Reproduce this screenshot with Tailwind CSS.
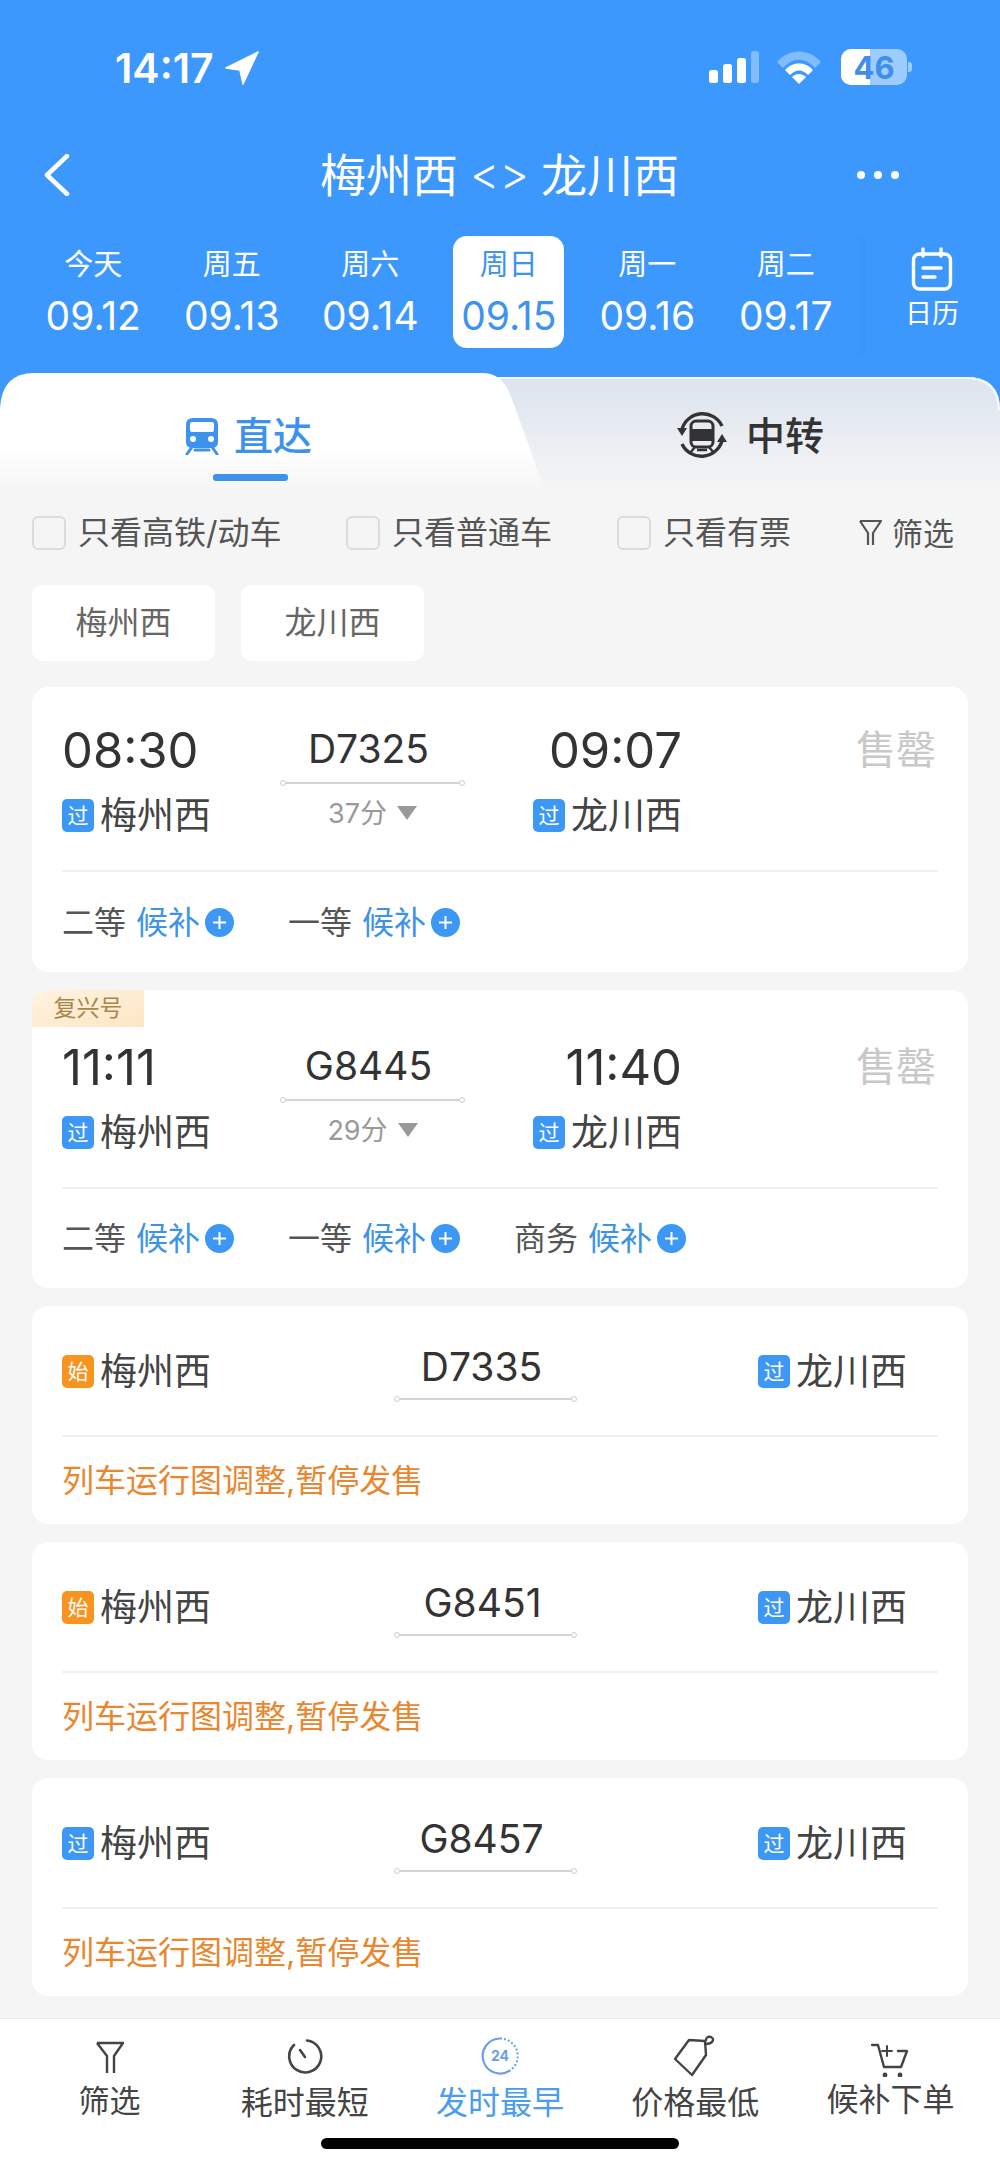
<!DOCTYPE html>
<html lang="zh">
<head>
<meta charset="utf-8">
<title>梅州西 - 龙川西</title>
<script src="https://cdn.jsdelivr.net/npm/@tailwindcss/browser@4"></script>
</head>
<body class="m-0">
<div class="w-[1000px] h-[2167px] overflow-hidden relative bg-[#f5f5f5] font-['Inter','Noto_Sans_CJK_SC',sans-serif]">

  <!-- Blue header -->
  <header class="h-[372px] bg-[#3d98fd] text-white relative">
    <!-- status bar -->
    <div class="h-[137px] pt-[48px] pl-[115px] pr-[88px] flex items-start justify-between">
      <div class="flex items-center h-[40px] gap-[11px]">
        <span class="text-[41px] font-semibold leading-none">14:17</span>
        <svg class="w-[34px] h-[34px]" viewBox="0 0 34 34"><path d="M33 1 L1 17 L15 19 L18 33 Z" fill="#fff" stroke="#fff" stroke-width="1.5" stroke-linejoin="round"/></svg>
      </div>
      <div class="flex items-center h-[36px] mt-[1px]">
        <svg class="w-[52px] h-[34px]" viewBox="0 0 52 34">
          <rect x="1" y="20" width="9" height="13" rx="2.5" fill="#fff"/>
          <rect x="15" y="14" width="9" height="19" rx="2.5" fill="#fff"/>
          <rect x="29" y="8" width="9" height="25" rx="2.5" fill="#fff"/>
          <rect x="43" y="1" width="8" height="32" rx="2.5" fill="#fff" fill-opacity=".35"/>
        </svg>
        <svg class="w-[46px] h-[34px] ml-[16px]" viewBox="0 0 46 34">
          <path d="M1 12 C13 -2 33 -2 45 12 L39 18 C29 7 17 7 7 18 Z" fill="#fff" fill-opacity=".35"/>
          <path d="M9 20 C17 11 29 11 37 20 L32 25 C26 19 20 19 14 25 Z" fill="#fff"/>
          <path d="M16 27 C20 23 26 23 30 27 L23 34 Z" fill="#fff"/>
        </svg>
        <div class="relative w-[66px] h-[36px] ml-[19px] rounded-[10px] overflow-hidden bg-white/50">
          <div class="absolute left-0 top-0 bottom-0 w-[29px] bg-white"></div>
          <span class="absolute inset-0 flex items-center justify-center text-[31px] font-bold text-[#3d8fe8] leading-none">46</span>
        </div>
        <div class="w-[4px] h-[10px] ml-[1px] rounded-r-[3px] bg-white/50"></div>
      </div>
    </div>
    <!-- nav -->
    <nav class="h-[76px] relative flex items-center justify-center">
      <svg class="absolute left-[42px] top-[17px] w-[30px] h-[42px]" viewBox="0 0 30 42"><path d="M25 2 L5 21 L25 40" fill="none" stroke="#fff" stroke-width="4.5" stroke-linecap="round" stroke-linejoin="round"/></svg>
      <div class="text-[46px] leading-none flex items-center ml-[-1px]">
        <span>梅州西</span><span class="text-[45px] font-light mx-[12px] -mt-[4px]">&lt;&gt;</span><span>龙川西</span>
      </div>
      <div class="absolute left-[857px] top-[34px] flex gap-[9px]">
        <span class="w-[8px] h-[8px] rounded-full bg-white"></span><span class="w-[8px] h-[8px] rounded-full bg-white"></span><span class="w-[8px] h-[8px] rounded-full bg-white"></span>
      </div>
    </nav>
    <!-- dates -->
    <div class="flex pl-[24px] mt-[23px] h-[112px] relative">
      <div class="w-[138.5px] flex flex-col items-center"><span class="h-[57px] pt-[14px] text-[29px] leading-none">今天</span><span class="text-[39px] leading-none pt-[3px]">09.12</span></div>
      <div class="w-[138.5px] flex flex-col items-center"><span class="h-[57px] pt-[14px] text-[29px] leading-none">周五</span><span class="text-[39px] leading-none pt-[3px]">09.13</span></div>
      <div class="w-[138.5px] flex flex-col items-center"><span class="h-[57px] pt-[14px] text-[29px] leading-none">周六</span><span class="text-[39px] leading-none pt-[3px]">09.14</span></div>
      <div class="w-[111px] mx-[13.75px] flex flex-col items-center bg-white rounded-[14px] text-[#3d93ee]"><span class="h-[57px] pt-[14px] text-[29px] leading-none">周日</span><span class="text-[39px] leading-none pt-[3px]">09.15</span></div>
      <div class="w-[138.5px] flex flex-col items-center"><span class="h-[57px] pt-[14px] text-[29px] leading-none">周一</span><span class="text-[39px] leading-none pt-[3px]">09.16</span></div>
      <div class="w-[138.5px] flex flex-col items-center"><span class="h-[57px] pt-[14px] text-[29px] leading-none">周二</span><span class="text-[39px] leading-none pt-[3px]">09.17</span></div>
      <div class="w-[16px] h-[120px] ml-[-5px] bg-linear-to-r from-transparent to-[#2f88ea]/20"></div>
      <div class="w-[70px] ml-[31px] -mr-[60px] flex flex-col items-center">
        <svg class="w-[42px] h-[44px] mt-[11px] shrink-0" viewBox="0 0 42 44" fill="none" stroke="#fff" stroke-width="3.4" stroke-linecap="round"><rect x="2.5" y="7" width="37" height="35" rx="6"/><path d="M12 2 V9 M30 2 V9 M12 21 H30 M12 30 H24"/></svg>
        <span class="text-[27px] leading-none mt-[9px] whitespace-nowrap">日历</span>
      </div>
    </div>
  </header>

  <!-- Tabs -->
  <div class="relative h-[118px]">
    <svg class="absolute left-0 top-0 w-[1000px] h-[118px]" viewBox="0 0 1000 118">
      <defs>
        <linearGradient id="grayTab" x1="0" y1="0" x2="0" y2="1"><stop offset="0" stop-color="#dce4ee"/><stop offset="1" stop-color="#f5f5f5"/></linearGradient>
        <linearGradient id="whiteTab" x1="0" y1="0" x2="0" y2="1"><stop offset="0" stop-color="#ffffff"/><stop offset=".65" stop-color="#ffffff"/><stop offset="1" stop-color="#f5f5f5"/></linearGradient>
      </defs>
      <path d="M0 0 H1000 V38 Q1000 5 966 5 H480 V118 H0 Z" fill="#3d98fd"/>
      <path d="M480 5 H966 Q1000 5 1000 38 V118 H480 Z" fill="url(#grayTab)"/>
      <path d="M480 6 H966 Q998 6 999 38" fill="none" stroke="#fff" stroke-opacity=".75" stroke-width="2"/>
      <path d="M0 36 Q2 1 34 1 H482 Q502 1 510 22 L545 118 H0 Z" fill="url(#whiteTab)"/>
    </svg>
    <div class="relative flex h-full">
      <div class="absolute left-[184px] top-[44px] flex items-center gap-[14px] text-[#3d92ec]">
        <svg class="w-[36px] h-[38px]" viewBox="0 0 36 38">
          <path d="M9 1 H27 Q34 1 34 8 V25 Q34 31 27 31 H9 Q2 31 2 25 V8 Q2 1 9 1 Z" fill="#3d92ec"/>
          <rect x="6" y="5" width="24" height="10" rx="2" fill="#fff"/>
          <circle cx="9" cy="22" r="3" fill="#fff"/><circle cx="27" cy="22" r="3" fill="#fff"/>
          <path d="M8 30 L3 37 M28 30 L33 37 M11 33 H25" stroke="#3d92ec" stroke-width="3" stroke-linecap="round"/>
        </svg>
        <span class="text-[39px] font-medium leading-none">直达</span>
      </div>
      <div class="absolute left-[213px] top-[102px] w-[75px] h-[7px] rounded-[3px] bg-[#3d92ec]"></div>
      <div class="absolute left-[676px] top-[37px] flex items-center gap-[18px] text-[#333]">
        <svg class="w-[52px] h-[52px]" viewBox="0 0 52 52" fill="none">
          <path d="M6 20 A21.5 21.5 0 0 1 46 17" stroke="#333" stroke-width="3.4"/>
          <path d="M46 32 A21.5 21.5 0 0 1 6 35" stroke="#333" stroke-width="3.4"/>
          <path d="M1 19 H11 L6 27 Z M41 33 H51 L46 25 Z" fill="#333"/>
          <rect x="15" y="12" width="22" height="26" rx="5" fill="none" stroke="#333" stroke-width="3"/>
          <rect x="15" y="20" width="22" height="12" fill="#333"/>
          <path d="M19 38 L14 44 M33 38 L38 44 M21 41 H31" stroke="#333" stroke-width="2.4"/>
        </svg>
        <span class="text-[39px] font-medium leading-none">中转</span>
      </div>
    </div>
  </div>

  <!-- Filter row -->
  <div class="h-[95px] pt-[26px] pl-[32px] flex items-start text-[32px] text-[#555] leading-none relative">
    <span class="w-[34px] h-[34px] rounded-[6px] border-2 border-[#dcdcdc] bg-[#f5f5f5]"></span>
    <span class="ml-[12px] w-[268px] h-[34px] flex items-center whitespace-nowrap">只看高铁/动车</span>
    <span class="w-[34px] h-[34px] rounded-[6px] border-2 border-[#dcdcdc] bg-[#f5f5f5]"></span>
    <span class="ml-[12px] w-[225px] h-[34px] flex items-center whitespace-nowrap">只看普通车</span>
    <span class="w-[34px] h-[34px] rounded-[6px] border-2 border-[#dcdcdc] bg-[#f5f5f5]"></span>
    <span class="ml-[12px] w-[195px] h-[34px] flex items-center whitespace-nowrap">只看有票</span>
    <span class="h-[34px] flex items-center gap-[9px] text-[31px]">
      <svg class="w-[25px] h-[28px]" viewBox="0 0 25 28" fill="none" stroke="#555" stroke-width="2.2" stroke-linejoin="round"><path d="M2 2 H23 L15 14 V26 M2 2 L10 14 V26"/></svg>
      <span>筛选</span>
    </span>
  </div>

  <!-- Chips -->
  <div class="flex gap-[26px] pl-[32px] h-[102px]">
    <div class="w-[183px] h-[76px] rounded-[10px] bg-white flex items-center justify-center text-[32px] text-[#666] leading-none">梅州西</div>
    <div class="w-[183px] h-[76px] rounded-[10px] bg-white flex items-center justify-center text-[32px] text-[#666] leading-none">龙川西</div>
  </div>

  <!-- Cards -->
  <main class="flex flex-col gap-[18px] px-[32px]">
    <!-- Card 1 -->
    <section class="h-[285px] rounded-[16px] bg-white px-[30px] pt-[39px] relative">
      <div class="flex h-[144px]">
        <div class="w-[218px] flex flex-col">
          <div class="h-[48px] flex items-center text-[49px] text-[#333] leading-none">08:30</div>
          <div class="h-[40px] mt-[21px] flex items-center gap-[6px] text-[37px] text-[#444] leading-none"><span class="w-[32px] h-[33px] rounded-[5px] bg-[#3d98f5] text-white text-[21px] flex items-center justify-center">过</span>梅州西</div>
        </div>
        <div class="w-[185px] flex flex-col items-center">
          <div class="h-[40px] mt-[2px] pr-[8px] flex items-center text-[39px] text-[#333] leading-none">D7325</div>
          <div class="w-full mt-[12px] flex items-center h-[6px]"><span class="w-[6px] h-[6px] rounded-full border border-[#ccc]"></span><span class="flex-1 h-[2px] bg-[#d4d4d4]"></span><span class="w-[6px] h-[6px] rounded-full border border-[#ccc]"></span></div>
          <div class="h-[40px] mt-[7px] flex items-center gap-[10px] text-[27px] text-[#999] leading-none">37分<span class="w-0 h-0 border-x-[10px] border-x-transparent border-t-[14px] border-t-[#999]"></span></div>
        </div>
        <div class="w-[217px] flex flex-col items-end">
          <div class="h-[48px] flex items-center text-[49px] text-[#333] leading-none">09:07</div>
          <div class="h-[40px] mt-[21px] flex items-center gap-[6px] text-[37px] text-[#444] leading-none"><span class="w-[32px] h-[33px] rounded-[5px] bg-[#3d98f5] text-white text-[21px] flex items-center justify-center">过</span>龙川西</div>
        </div>
        <div class="flex-1 flex justify-end pr-[2px]"><div class="h-[48px] flex items-center text-[40px] text-[#c8c8c8] leading-none">售罄</div></div>
      </div>
      <div class="h-[2px] bg-[#f0f0f0]"></div>
      <div class="h-[101px] flex items-center text-[32px] leading-none">
        <div class="w-[226px] flex items-center"><span class="text-[#555] w-[74px]">二等</span><span class="text-[#3d93e8]">候补</span><span class="ml-[5px] w-[29px] h-[29px] rounded-full bg-[#3d98f5] text-white flex items-center justify-center"><svg class="w-[15px] h-[15px]" viewBox="0 0 15 15"><path d="M7.5 1 V14 M1 7.5 H14" stroke="#fff" stroke-width="2"/></svg></span></div>
        <div class="w-[226px] flex items-center"><span class="text-[#555] w-[74px]">一等</span><span class="text-[#3d93e8]">候补</span><span class="ml-[5px] w-[29px] h-[29px] rounded-full bg-[#3d98f5] text-white flex items-center justify-center"><svg class="w-[15px] h-[15px]" viewBox="0 0 15 15"><path d="M7.5 1 V14 M1 7.5 H14" stroke="#fff" stroke-width="2"/></svg></span></div>
      </div>
    </section>

    <!-- Card 2 -->
    <section class="h-[298px] rounded-[16px] bg-white px-[30px] pt-[53px] relative overflow-hidden">
      <div class="absolute left-0 top-0 w-[112px] h-[37px] bg-linear-to-br from-[#fff3e0] to-[#fde6c5] flex items-center justify-center text-[23px] text-[#a8874f] leading-none">复兴号</div>
      <div class="flex h-[144px]">
        <div class="w-[218px] flex flex-col">
          <div class="h-[48px] flex items-center text-[49px] text-[#333] leading-none">11:11</div>
          <div class="h-[40px] mt-[21px] flex items-center gap-[6px] text-[37px] text-[#444] leading-none"><span class="w-[32px] h-[33px] rounded-[5px] bg-[#3d98f5] text-white text-[21px] flex items-center justify-center">过</span>梅州西</div>
        </div>
        <div class="w-[185px] flex flex-col items-center">
          <div class="h-[40px] mt-[2px] pr-[8px] flex items-center text-[39px] text-[#333] leading-none">G8445</div>
          <div class="w-full mt-[12px] flex items-center h-[6px]"><span class="w-[6px] h-[6px] rounded-full border border-[#ccc]"></span><span class="flex-1 h-[2px] bg-[#d4d4d4]"></span><span class="w-[6px] h-[6px] rounded-full border border-[#ccc]"></span></div>
          <div class="h-[40px] mt-[7px] flex items-center gap-[10px] text-[27px] text-[#999] leading-none">29分<span class="w-0 h-0 border-x-[10px] border-x-transparent border-t-[14px] border-t-[#999]"></span></div>
        </div>
        <div class="w-[217px] flex flex-col items-end">
          <div class="h-[48px] flex items-center text-[49px] text-[#333] leading-none">11:40</div>
          <div class="h-[40px] mt-[21px] flex items-center gap-[6px] text-[37px] text-[#444] leading-none"><span class="w-[32px] h-[33px] rounded-[5px] bg-[#3d98f5] text-white text-[21px] flex items-center justify-center">过</span>龙川西</div>
        </div>
        <div class="flex-1 flex justify-end pr-[2px]"><div class="h-[48px] flex items-center text-[40px] text-[#c8c8c8] leading-none">售罄</div></div>
      </div>
      <div class="h-[2px] bg-[#f0f0f0]"></div>
      <div class="h-[99px] flex items-center text-[32px] leading-none">
        <div class="w-[226px] flex items-center"><span class="text-[#555] w-[74px]">二等</span><span class="text-[#3d93e8]">候补</span><span class="ml-[5px] w-[29px] h-[29px] rounded-full bg-[#3d98f5] text-white flex items-center justify-center"><svg class="w-[15px] h-[15px]" viewBox="0 0 15 15"><path d="M7.5 1 V14 M1 7.5 H14" stroke="#fff" stroke-width="2"/></svg></span></div>
        <div class="w-[226px] flex items-center"><span class="text-[#555] w-[74px]">一等</span><span class="text-[#3d93e8]">候补</span><span class="ml-[5px] w-[29px] h-[29px] rounded-full bg-[#3d98f5] text-white flex items-center justify-center"><svg class="w-[15px] h-[15px]" viewBox="0 0 15 15"><path d="M7.5 1 V14 M1 7.5 H14" stroke="#fff" stroke-width="2"/></svg></span></div>
        <div class="w-[226px] flex items-center"><span class="text-[#555] w-[74px]">商务</span><span class="text-[#3d93e8]">候补</span><span class="ml-[5px] w-[29px] h-[29px] rounded-full bg-[#3d98f5] text-white flex items-center justify-center"><svg class="w-[15px] h-[15px]" viewBox="0 0 15 15"><path d="M7.5 1 V14 M1 7.5 H14" stroke="#fff" stroke-width="2"/></svg></span></div>
      </div>
    </section>

    <!-- Card 3 -->
    <section class="h-[218px] rounded-[16px] bg-white px-[30px] pt-[40px]">
      <div class="flex h-[89px]">
        <div class="w-[332px] h-[50px] flex items-center gap-[6px] text-[37px] text-[#444] leading-none"><span class="w-[32px] h-[33px] rounded-[5px] bg-[#f7941f] text-white text-[21px] flex items-center justify-center">始</span>梅州西</div>
        <div class="w-[183px] flex flex-col items-center">
          <div class="h-[40px] pr-[8px] flex items-center text-[39px] text-[#333] leading-none">D7335</div>
          <div class="w-full mt-[10px] flex items-center h-[6px]"><span class="w-[6px] h-[6px] rounded-full border border-[#ccc]"></span><span class="flex-1 h-[2px] bg-[#d4d4d4]"></span><span class="w-[6px] h-[6px] rounded-full border border-[#ccc]"></span></div>
        </div>
        <div class="ml-[181px] h-[50px] flex items-center gap-[6px] text-[37px] text-[#444] leading-none"><span class="w-[32px] h-[33px] rounded-[5px] bg-[#3d98f5] text-white text-[21px] flex items-center justify-center">过</span>龙川西</div>
      </div>
      <div class="h-[2px] bg-[#f0f0f0]"></div>
      <div class="h-[87px] flex items-center text-[32px] text-[#e8872f] leading-none">列车运行图调整,暂停发售</div>
    </section>

    <!-- Card 4 -->
    <section class="h-[218px] rounded-[16px] bg-white px-[30px] pt-[40px]">
      <div class="flex h-[89px]">
        <div class="w-[332px] h-[50px] flex items-center gap-[6px] text-[37px] text-[#444] leading-none"><span class="w-[32px] h-[33px] rounded-[5px] bg-[#f7941f] text-white text-[21px] flex items-center justify-center">始</span>梅州西</div>
        <div class="w-[183px] flex flex-col items-center">
          <div class="h-[40px] pr-[6px] flex items-center text-[39px] text-[#333] leading-none">G8451</div>
          <div class="w-full mt-[10px] flex items-center h-[6px]"><span class="w-[6px] h-[6px] rounded-full border border-[#ccc]"></span><span class="flex-1 h-[2px] bg-[#d4d4d4]"></span><span class="w-[6px] h-[6px] rounded-full border border-[#ccc]"></span></div>
        </div>
        <div class="ml-[181px] h-[50px] flex items-center gap-[6px] text-[37px] text-[#444] leading-none"><span class="w-[32px] h-[33px] rounded-[5px] bg-[#3d98f5] text-white text-[21px] flex items-center justify-center">过</span>龙川西</div>
      </div>
      <div class="h-[2px] bg-[#f0f0f0]"></div>
      <div class="h-[87px] flex items-center text-[32px] text-[#e8872f] leading-none">列车运行图调整,暂停发售</div>
    </section>

    <!-- Card 5 -->
    <section class="h-[218px] rounded-[16px] bg-white px-[30px] pt-[40px]">
      <div class="flex h-[89px]">
        <div class="w-[332px] h-[50px] flex items-center gap-[6px] text-[37px] text-[#444] leading-none"><span class="w-[32px] h-[33px] rounded-[5px] bg-[#3d98f5] text-white text-[21px] flex items-center justify-center">过</span>梅州西</div>
        <div class="w-[183px] flex flex-col items-center">
          <div class="h-[40px] pr-[8px] flex items-center text-[39px] text-[#333] leading-none">G8457</div>
          <div class="w-full mt-[10px] flex items-center h-[6px]"><span class="w-[6px] h-[6px] rounded-full border border-[#ccc]"></span><span class="flex-1 h-[2px] bg-[#d4d4d4]"></span><span class="w-[6px] h-[6px] rounded-full border border-[#ccc]"></span></div>
        </div>
        <div class="ml-[181px] h-[50px] flex items-center gap-[6px] text-[37px] text-[#444] leading-none"><span class="w-[32px] h-[33px] rounded-[5px] bg-[#3d98f5] text-white text-[21px] flex items-center justify-center">过</span>龙川西</div>
      </div>
      <div class="h-[2px] bg-[#f0f0f0]"></div>
      <div class="h-[87px] flex items-center text-[32px] text-[#e8872f] leading-none">列车运行图调整,暂停发售</div>
    </section>
  </main>

  <!-- Bottom bar -->
  <footer class="absolute left-0 right-0 bottom-0 h-[149px] bg-white border-t border-[#ececec] px-[12px] grid grid-cols-5 text-[#444] leading-none">
    <div class="flex flex-col items-center">
      <svg class="w-[30px] h-[34px] mt-[22px]" viewBox="0 0 30 34" fill="none" stroke="#444" stroke-width="2.4" stroke-linejoin="round"><path d="M2 2 H28 L19 15 V32 M2 2 L12 15 V32"/></svg>
      <span class="text-[31px] mt-[10px]">筛选</span>
    </div>
    <div class="flex flex-col items-center">
      <svg class="w-[36px] h-[37px] mt-[19px]" viewBox="0 0 36 37" fill="none" stroke="#444" stroke-width="2.6" stroke-linecap="round"><path d="M20 2.5 A16 16 0 1 1 7 7"/><path d="M13 12 L18 19"/></svg>
      <span class="text-[32px] mt-[12px]">耗时最短</span>
    </div>
    <div class="flex flex-col items-center text-[#4b9df0]">
      <svg class="w-[38px] h-[38px] mt-[18px]" viewBox="0 0 38 38" fill="none"><path d="M19 1.5 A17.5 17.5 0 1 0 29 33.5" stroke="#6c9fe6" stroke-width="2.2"/><path d="M19 1.5 A17.5 17.5 0 0 1 29 33.5" stroke="#6c9fe6" stroke-width="2" stroke-dasharray="2 2"/><text x="19" y="24" text-anchor="middle" font-size="14" font-weight="700" fill="#6c9fe6" font-family="Inter, sans-serif">24</text></svg>
      <span class="text-[32px] mt-[12px]">发时最早</span>
    </div>
    <div class="flex flex-col items-center">
      <svg class="w-[44px] h-[42px] mt-[16px]" viewBox="0 0 44 42" fill="none" stroke="#444" stroke-width="2.4" stroke-linejoin="round" stroke-linecap="round"><path d="M16 5 L32 6 L33 20 L19 40 L2 24 Z"/><path d="M32 9 C40 9 42 4 38 2 C35 1 33 3 33 5"/></svg>
      <span class="text-[32px] mt-[10px]">价格最低</span>
    </div>
    <div class="flex flex-col items-center">
      <svg class="w-[38px] h-[34px] mt-[24px]" viewBox="0 0 38 34" fill="none" stroke="#444" stroke-width="2.4" stroke-linecap="round" stroke-linejoin="round"><path d="M1 2 H7 L13 24 H30 L36 8 H27"/><path d="M16 3 V13 M11 8 H21" stroke-width="2"/><circle cx="14" cy="32" r="1.2" fill="#444"/><circle cx="29" cy="32" r="1.2" fill="#444"/></svg>
      <span class="text-[32px] mt-[7px]">候补下单</span>
    </div>
    <div class="absolute left-[321px] top-[119px] w-[358px] h-[11px] rounded-full bg-black"></div>
  </footer>
</div>
</body>
</html>
